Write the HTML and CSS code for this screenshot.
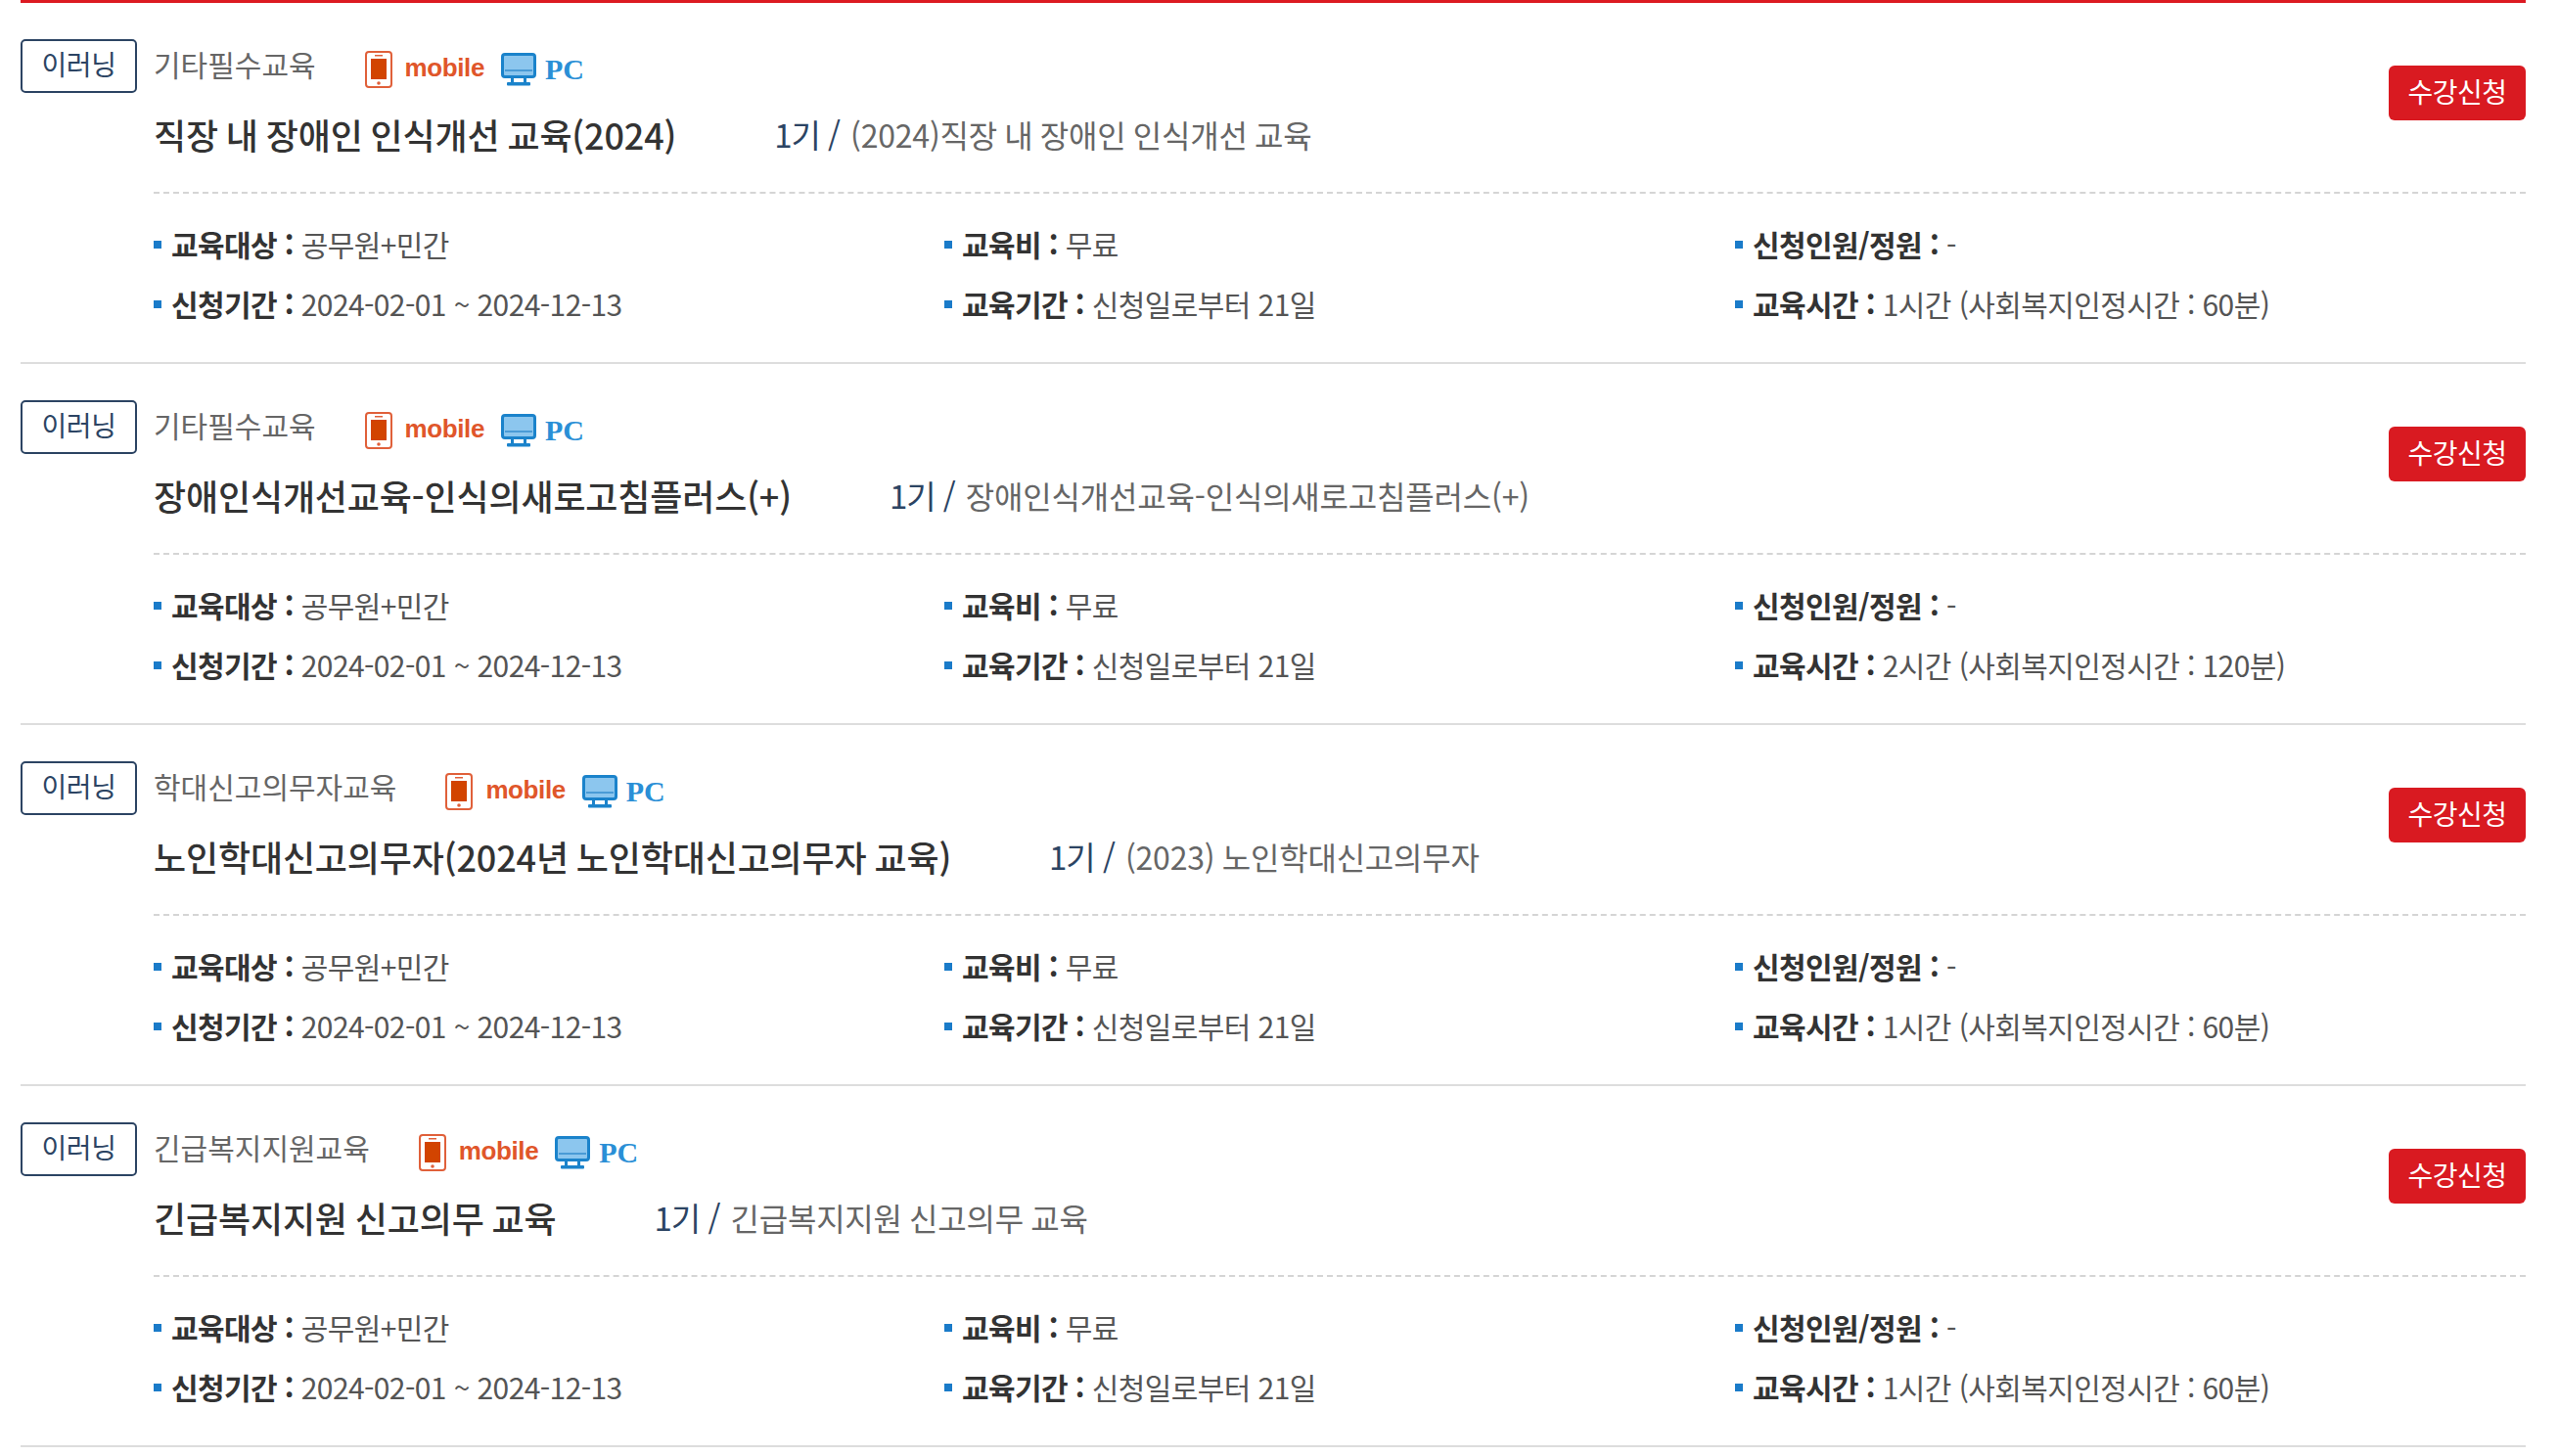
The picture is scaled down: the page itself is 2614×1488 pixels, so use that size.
FILE: index.html
```html
<!DOCTYPE html>
<html lang="ko">

<head>
    <meta charset="UTF-8">
    <title>교육과정 목록</title>
    <link rel="stylesheet" href="styles.css">
</head>

<body>
    <ul class="course-list">
        <li class="course">
            <span class="badge">이러닝</span>
            <div class="course-body">
                <div class="course-head">
                    <div class="course-info">
                        <div class="meta">
                            <span class="category">기타필수교육</span>
                            <span class="device">
                                <svg class="ico-mobile" viewBox="0 0 28 38"><rect x="1" y="1" width="26" height="36" rx="3" fill="#fff" stroke="#e0603a" stroke-width="2"/><rect x="6" y="8" width="16" height="21" fill="#d24400"/><rect x="10" y="4" width="8" height="1.5" fill="#e0603a"/><circle cx="14" cy="33" r="1.8" fill="#e0603a"/></svg>
                                <span class="txt-mobile">mobile</span>
                                <svg class="ico-pc" viewBox="0 0 36 34"><rect x="1.5" y="1.5" width="33" height="23" rx="2.5" fill="#8cc6ee" stroke="#1b83cb" stroke-width="3"/><rect x="4" y="17" width="28" height="2" fill="#4a9bd6"/><rect x="10" y="25" width="3" height="6" fill="#1b83cb"/><rect x="23" y="25" width="3" height="6" fill="#1b83cb"/><rect x="6" y="30" width="24" height="3.5" rx="1" fill="#1b83cb"/></svg>
                                <span class="txt-pc">PC</span>
                            </span>
                        </div>
                        <div class="title-line">
                            <span class="title">직장 내 장애인 인식개선 교육(2024)</span>
                            <span class="term">1기 /</span>
                            <span class="subtitle">(2024)직장 내 장애인 인식개선 교육</span>
                        </div>
                    </div>
                    <a class="apply" href="#">수강신청</a>
                </div>
                <ul class="facts">
                    <li><b>교육대상 :</b> 공무원+민간</li>
                    <li><b>교육비 :</b> 무료</li>
                    <li><b>신청인원/정원 :</b> -</li>
                    <li><b>신청기간 :</b> 2024-02-01 ~ 2024-12-13</li>
                    <li><b>교육기간 :</b> 신청일로부터 21일</li>
                    <li><b>교육시간 :</b> 1시간 (사회복지인정시간 : 60분)</li>
                </ul>
            </div>
        </li>
        <li class="course">
            <span class="badge">이러닝</span>
            <div class="course-body">
                <div class="course-head">
                    <div class="course-info">
                        <div class="meta">
                            <span class="category">기타필수교육</span>
                            <span class="device">
                                <svg class="ico-mobile" viewBox="0 0 28 38"><rect x="1" y="1" width="26" height="36" rx="3" fill="#fff" stroke="#e0603a" stroke-width="2"/><rect x="6" y="8" width="16" height="21" fill="#d24400"/><rect x="10" y="4" width="8" height="1.5" fill="#e0603a"/><circle cx="14" cy="33" r="1.8" fill="#e0603a"/></svg>
                                <span class="txt-mobile">mobile</span>
                                <svg class="ico-pc" viewBox="0 0 36 34"><rect x="1.5" y="1.5" width="33" height="23" rx="2.5" fill="#8cc6ee" stroke="#1b83cb" stroke-width="3"/><rect x="4" y="17" width="28" height="2" fill="#4a9bd6"/><rect x="10" y="25" width="3" height="6" fill="#1b83cb"/><rect x="23" y="25" width="3" height="6" fill="#1b83cb"/><rect x="6" y="30" width="24" height="3.5" rx="1" fill="#1b83cb"/></svg>
                                <span class="txt-pc">PC</span>
                            </span>
                        </div>
                        <div class="title-line">
                            <span class="title">장애인식개선교육-인식의새로고침플러스(+)</span>
                            <span class="term">1기 /</span>
                            <span class="subtitle">장애인식개선교육-인식의새로고침플러스(+)</span>
                        </div>
                    </div>
                    <a class="apply" href="#">수강신청</a>
                </div>
                <ul class="facts">
                    <li><b>교육대상 :</b> 공무원+민간</li>
                    <li><b>교육비 :</b> 무료</li>
                    <li><b>신청인원/정원 :</b> -</li>
                    <li><b>신청기간 :</b> 2024-02-01 ~ 2024-12-13</li>
                    <li><b>교육기간 :</b> 신청일로부터 21일</li>
                    <li><b>교육시간 :</b> 2시간 (사회복지인정시간 : 120분)</li>
                </ul>
            </div>
        </li>
        <li class="course">
            <span class="badge">이러닝</span>
            <div class="course-body">
                <div class="course-head">
                    <div class="course-info">
                        <div class="meta">
                            <span class="category">학대신고의무자교육</span>
                            <span class="device">
                                <svg class="ico-mobile" viewBox="0 0 28 38"><rect x="1" y="1" width="26" height="36" rx="3" fill="#fff" stroke="#e0603a" stroke-width="2"/><rect x="6" y="8" width="16" height="21" fill="#d24400"/><rect x="10" y="4" width="8" height="1.5" fill="#e0603a"/><circle cx="14" cy="33" r="1.8" fill="#e0603a"/></svg>
                                <span class="txt-mobile">mobile</span>
                                <svg class="ico-pc" viewBox="0 0 36 34"><rect x="1.5" y="1.5" width="33" height="23" rx="2.5" fill="#8cc6ee" stroke="#1b83cb" stroke-width="3"/><rect x="4" y="17" width="28" height="2" fill="#4a9bd6"/><rect x="10" y="25" width="3" height="6" fill="#1b83cb"/><rect x="23" y="25" width="3" height="6" fill="#1b83cb"/><rect x="6" y="30" width="24" height="3.5" rx="1" fill="#1b83cb"/></svg>
                                <span class="txt-pc">PC</span>
                            </span>
                        </div>
                        <div class="title-line">
                            <span class="title">노인학대신고의무자(2024년 노인학대신고의무자 교육)</span>
                            <span class="term">1기 /</span>
                            <span class="subtitle">(2023) 노인학대신고의무자</span>
                        </div>
                    </div>
                    <a class="apply" href="#">수강신청</a>
                </div>
                <ul class="facts">
                    <li><b>교육대상 :</b> 공무원+민간</li>
                    <li><b>교육비 :</b> 무료</li>
                    <li><b>신청인원/정원 :</b> -</li>
                    <li><b>신청기간 :</b> 2024-02-01 ~ 2024-12-13</li>
                    <li><b>교육기간 :</b> 신청일로부터 21일</li>
                    <li><b>교육시간 :</b> 1시간 (사회복지인정시간 : 60분)</li>
                </ul>
            </div>
        </li>
        <li class="course">
            <span class="badge">이러닝</span>
            <div class="course-body">
                <div class="course-head">
                    <div class="course-info">
                        <div class="meta">
                            <span class="category">긴급복지지원교육</span>
                            <span class="device">
                                <svg class="ico-mobile" viewBox="0 0 28 38"><rect x="1" y="1" width="26" height="36" rx="3" fill="#fff" stroke="#e0603a" stroke-width="2"/><rect x="6" y="8" width="16" height="21" fill="#d24400"/><rect x="10" y="4" width="8" height="1.5" fill="#e0603a"/><circle cx="14" cy="33" r="1.8" fill="#e0603a"/></svg>
                                <span class="txt-mobile">mobile</span>
                                <svg class="ico-pc" viewBox="0 0 36 34"><rect x="1.5" y="1.5" width="33" height="23" rx="2.5" fill="#8cc6ee" stroke="#1b83cb" stroke-width="3"/><rect x="4" y="17" width="28" height="2" fill="#4a9bd6"/><rect x="10" y="25" width="3" height="6" fill="#1b83cb"/><rect x="23" y="25" width="3" height="6" fill="#1b83cb"/><rect x="6" y="30" width="24" height="3.5" rx="1" fill="#1b83cb"/></svg>
                                <span class="txt-pc">PC</span>
                            </span>
                        </div>
                        <div class="title-line">
                            <span class="title">긴급복지지원 신고의무 교육</span>
                            <span class="term">1기 /</span>
                            <span class="subtitle">긴급복지지원 신고의무 교육</span>
                        </div>
                    </div>
                    <a class="apply" href="#">수강신청</a>
                </div>
                <ul class="facts">
                    <li><b>교육대상 :</b> 공무원+민간</li>
                    <li><b>교육비 :</b> 무료</li>
                    <li><b>신청인원/정원 :</b> -</li>
                    <li><b>신청기간 :</b> 2024-02-01 ~ 2024-12-13</li>
                    <li><b>교육기간 :</b> 신청일로부터 21일</li>
                    <li><b>교육시간 :</b> 1시간 (사회복지인정시간 : 60분)</li>
                </ul>
            </div>
        </li>
    </ul>
</body>

</html>
```

FILE: styles.css
```css
body {
    margin: 0;
    background-color: #fff;
    font-family: "Noto Sans CJK KR", "Noto Sans", sans-serif;
    color: #333;
}

ul {
    list-style: none;
    margin: 0;
    padding: 0;
}

.course-list {
    width: 2560px;
    margin-left: 21px;
    border-top: 3px solid #dc1a22;
}

.course {
    display: flex;
    height: 330px;
    padding-top: 37px;
    border-bottom: 2px solid #ddd;
}

.badge {
    box-sizing: border-box;
    width: 119px;
    height: 55px;
    margin-right: 17px;
    border: 2px solid #2c4463;
    border-radius: 5px;
    color: #2c4463;
    font-size: 28px;
    line-height: 47px;
    text-align: center;
    letter-spacing: -0.5px;
}

.course-body {
    flex: 1;
}

.course-head {
    display: flex;
    justify-content: space-between;
    align-items: center;
    height: 156px;
    border-bottom: 2px dashed #d5d5d5;
}

.course-info {
    align-self: flex-start;
}

.meta {
    display: flex;
    align-items: center;
    height: 55px;
}

.category {
    margin-right: 50px;
    margin-top: -6px;
    color: #666;
    font-size: 30px;
    letter-spacing: 0;
}

.device {
    display: flex;
    align-items: center;
    margin-top: 7px;
}

.ico-mobile {
    width: 28px;
    height: 38px;
    margin-right: 13px;
}

.txt-mobile {
    margin-right: 17px;
    margin-top: -3px;
    color: #e0562a;
    font-family: "Liberation Sans", sans-serif;
    font-size: 26px;
    font-weight: bold;
    letter-spacing: -0.4px;
}

.ico-pc {
    width: 36px;
    height: 34px;
    margin-right: 9px;
}

.txt-pc {
    color: #2a8fd6;
    font-family: "Liberation Serif", serif;
    font-size: 30px;
    font-weight: bold;
}

.title-line {
    display: flex;
    align-items: center;
    height: 60px;
    margin-top: 12px;
}

.title {
    margin-right: 100px;
    font-size: 36px;
    font-weight: 500;
    letter-spacing: -0.15px;
    word-spacing: -2px;
}

.term {
    margin-right: 11px;
    color: #2c4463;
    font-size: 33px;
    letter-spacing: -1px;
}

.subtitle {
    color: #666;
    font-size: 32px;
    letter-spacing: -0.2px;
    word-spacing: -1.5px;
}

.apply {
    box-sizing: border-box;
    width: 140px;
    height: 56px;
    margin-bottom: 46px;
    border-radius: 6px;
    background-color: #d91a21;
    color: #fff;
    font-size: 28px;
    line-height: 52px;
    text-align: center;
    text-decoration: none;
    letter-spacing: -0.5px;
}

.facts {
    display: grid;
    grid-template-columns: repeat(3, 1fr);
    grid-auto-rows: 61px;
    margin-top: 21px;
}

.facts li {
    position: relative;
    padding-left: 18px;
    color: #555;
    font-size: 30px;
    line-height: 61px;
    letter-spacing: -0.6px;
}

.facts li::before {
    content: "";
    position: absolute;
    left: 0;
    top: 27px;
    width: 8px;
    height: 8px;
    background-color: #1a7bc9;
}

.facts b {
    color: #333;
}
```
